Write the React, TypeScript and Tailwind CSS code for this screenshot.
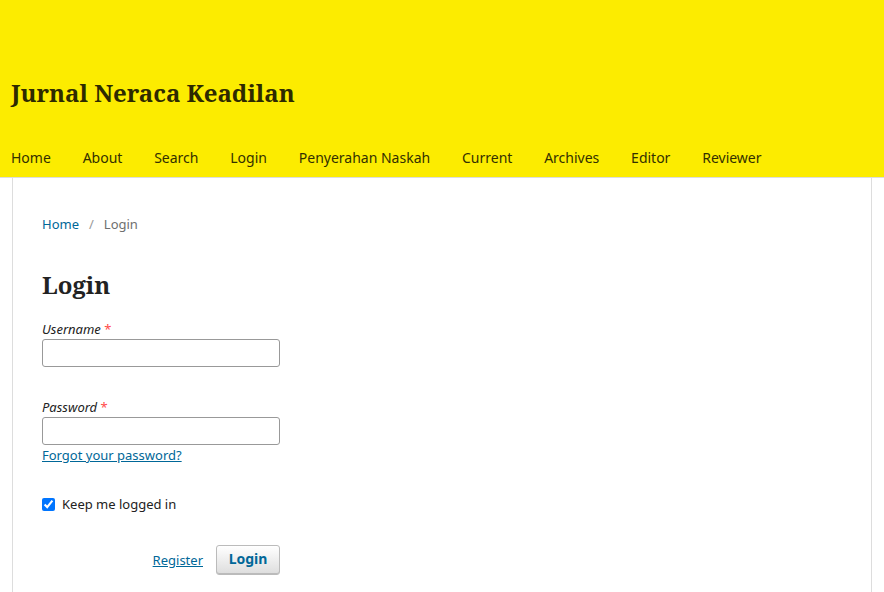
export default function App() {
  const nav = ["Home", "About", "Search", "Login", "Penyerahan Naskah", "Current", "Archives", "Editor", "Reviewer"];
  return (
    <div className="min-h-[592px] bg-white font-['Noto_Sans',sans-serif]">
      <header className="bg-[#fcec00] border-b border-[#dddddd]">
        <div className="h-[130px] flex items-end pl-[11px] pb-[22px]">
          <h1 className="font-['Noto_Serif','DejaVu_Serif',serif] font-bold text-[24px] leading-[30px] text-[#2e2a00]">
            Jurnal Neraca Keadilan
          </h1>
        </div>
        <nav className="h-[47px] flex items-start pt-[18px] pl-[11px] gap-[31.8px]">
          {nav.map((n) => (
            <a key={n} className="text-[14px] text-[#333000] leading-[20px] cursor-pointer">
              {n}
            </a>
          ))}
        </nav>
      </header>
      <main className="mx-[12px] min-h-[414px] border-l border-r border-[#dddddd] px-[29px]">
        <div className="pt-[37px] text-[13px] leading-[18px] flex items-center">
          <a className="text-[#006798]">Home</a>
          <span className="text-[#999999] mx-[10px]">/</span>
          <span className="text-[#6f6f6f]">Login</span>
        </div>
        <h2 className="mt-[35px] font-['Noto_Serif','DejaVu_Serif',serif] font-bold text-[24px] leading-[34px] text-[#222222]">
          Login
        </h2>
        <form className="mt-[18px] w-[238px]">
          <label className="block text-[13px] italic leading-[18px] text-[#222222]">
            Username <span className="text-[#ff4a4a] not-italic">*</span>
          </label>
          <input className="mt-[1px] block w-[238px] h-[28px] border border-[#999999] rounded-[3px] bg-white" />
          <label className="block mt-[31px] text-[13px] italic leading-[18px] text-[#222222]">
            Password <span className="text-[#ff4a4a] not-italic">*</span>
          </label>
          <input type="password" className="mt-[1px] block w-[238px] h-[28px] border border-[#999999] rounded-[3px] bg-white" />
          <a className="block mt-[1px] text-[13px] leading-[18px] text-[#006798] underline cursor-pointer">
            Forgot your password?
          </a>
          <label className="mt-[31px] flex items-center gap-[7px] text-[13px] leading-[18px] text-[#222222]">
            <input type="checkbox" defaultChecked className="w-[13px] h-[13px] accent-[#0075ff]" />
            Keep me logged in
          </label>
          <div className="mt-[32px] flex justify-end items-center gap-[13px]">
            <a className="text-[13px] leading-[18px] text-[#006798] underline cursor-pointer">Register</a>
            <button
              type="button"
              className="h-[30px] w-[64px] rounded-[3px] border border-[#bbbbbb] bg-gradient-to-b from-[#ffffff] to-[#dddddd] text-[14px] leading-[18px] pb-[2px] font-bold text-[#006798] shadow-[inset_0_-1px_0_#bbbbbb]"
            >
              Login
            </button>
          </div>
        </form>
      </main>
    </div>
  );
}
